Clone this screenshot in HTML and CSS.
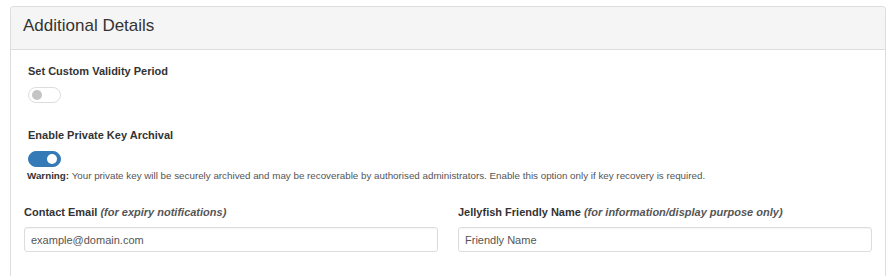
FILE: index.html
```html
<!DOCTYPE html>
<html lang="en">
<head>
<meta charset="UTF-8">
<meta name="viewport" content="width=device-width, initial-scale=1.0">
<title>Additional Details</title>
<link rel="stylesheet" href="styles.css">
</head>
<body>
<div class="panel">
  <div class="panel-heading">
    <h3>Additional Details</h3>
  </div>
  <div class="panel-body">
    <div class="options">
      <div class="option">
        <label class="field-label">Set Custom Validity Period</label>
        <span class="switch"></span>
      </div>
      <div class="option">
        <label class="field-label">Enable Private Key Archival</label>
        <span class="switch on"></span>
        <p class="warning"><b>Warning:</b> Your private key will be securely archived and may be recoverable by authorised administrators. Enable this option only if key recovery is required.</p>
      </div>
    </div>
    <div class="fields">
      <div class="field">
        <label class="field-label" for="email">Contact Email <em>(for expiry notifications)</em></label>
        <input type="text" id="email" placeholder="example@domain.com">
      </div>
      <div class="field">
        <label class="field-label" for="friendly">Jellyfish Friendly Name <em>(for information/display purpose only)</em></label>
        <input type="text" id="friendly" placeholder="Friendly Name">
      </div>
    </div>
  </div>
</div>
</body>
</html>
```
FILE: styles.css
```css
html, body {
  height: 100%;
  overflow: hidden;
}
body {
  box-sizing: border-box;
  font-family: 'Liberation Sans', Arial, sans-serif;
  margin: 0;
  padding: 6px 8px 0 10px;
  color: #333;
  background: #fff;
}
.panel {
  box-sizing: border-box;
  height: 100%;
  border: 1px solid #ddd;
  border-bottom: none;
  border-radius: 4px 4px 0 0;
}
.panel-heading {
  background-color: #f5f5f5;
  border-bottom: 1px solid #ddd;
  border-radius: 3px 3px 0 0;
  padding: 9px 12px 13px;
}
.panel-heading h3 {
  margin: 0;
  font-size: 17px;
  font-weight: normal;
  line-height: 20px;
}
.panel-body {
  padding: 14px 13px;
}
.options {
  padding-left: 4px;
}
.option {
  display: flex;
  flex-direction: column;
  align-items: flex-start;
}
.option + .option {
  margin-top: 25px;
}
.field-label {
  display: block;
  font-size: 11px;
  font-weight: bold;
  line-height: 15px;
}
.field-label em {
  color: #555;
}
.switch {
  position: relative;
  display: block;
  width: 31px;
  height: 14px;
  margin-top: 8px;
  border: 1px solid #ddd;
  border-radius: 8px;
  background: #fff;
}
.switch::after {
  content: '';
  position: absolute;
  top: 2px;
  left: 3px;
  width: 10px;
  height: 10px;
  border-radius: 50%;
  background: #c4c4c4;
}
.switch.on {
  background: #337ab7;
  border-color: #337ab7;
}
.switch.on::after {
  left: auto;
  right: 3px;
  background: #fff;
}
.warning {
  margin: 3px 0 0 -1px;
  font-size: 9.8px;
  line-height: 12px;
  color: #555;
}
.warning b {
  color: #333;
}
.fields {
  display: grid;
  grid-template-columns: 1fr 1fr;
  gap: 20px;
  margin-top: 23px;
}
.field input {
  display: block;
  box-sizing: border-box;
  width: 100%;
  height: 25px;
  margin-top: 7px;
  padding: 0 6px;
  border: 1px solid #ddd;
  border-radius: 3px;
  box-shadow: inset 0 1px 1px rgba(0, 0, 0, 0.04);
  font-family: inherit;
  font-size: 11px;
  color: #555;
}
.field input::placeholder {
  color: #555;
}
```
